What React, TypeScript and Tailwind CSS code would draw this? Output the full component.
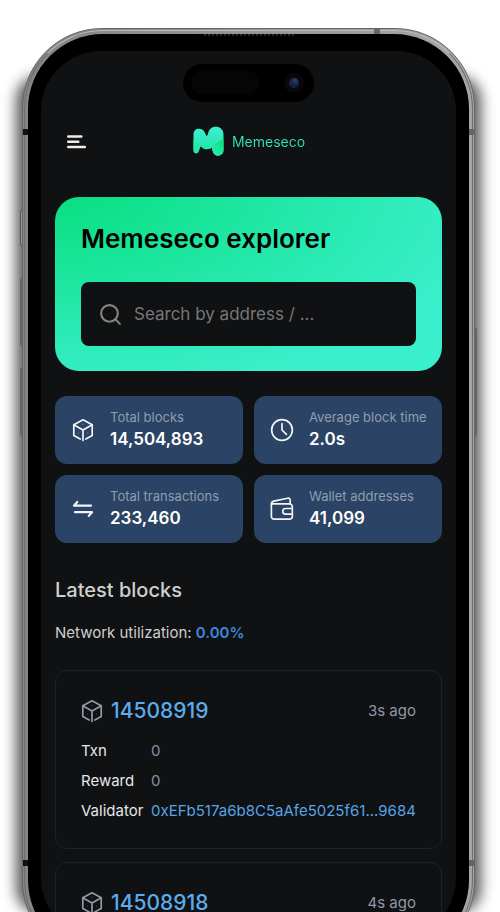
import type { ReactNode } from "react";
import { Search } from "lucide-react";

type Block = {
  height: string;
  age: string;
  details?: { txn: number; reward: number; validator: string };
};

const blocks: Block[] = [
  {
    height: "14508919",
    age: "3s ago",
    details: { txn: 0, reward: 0, validator: "0xEFb517a6b8C5aAfe5025f61...9684" },
  },
  { height: "14508918", age: "4s ago" },
];

function CubeIcon() {
  return (
    <svg viewBox="0 0 22 24" className="h-6 w-[22px] shrink-0" fill="none" stroke="currentColor" strokeWidth="1.7" strokeLinejoin="round" strokeLinecap="round">
      <path d="M8.200 21 1.800 17.500V6.700L11 1.800l9.200 4.900v10.800L13.800 21" />
      <path d="M1.800 6.700l9.200 5.300 9.200-5.300M11 12V22.500" />
      <path d="M11 6v.6M6 15.300l.5-.3M16 15.300l-.5-.3" strokeWidth="1" strokeOpacity="0.4" />
    </svg>
  );
}

function ClockIcon() {
  return (
    <svg viewBox="0 0 26 26" className="size-[26px]" fill="none" stroke="currentColor" strokeWidth="1.8" strokeLinecap="round" strokeLinejoin="round">
      <circle cx="13" cy="13" r="11.2" />
      <path d="M13 6v7l4.800 4.800" />
    </svg>
  );
}

function TransferIcon() {
  return (
    <svg viewBox="0 0 22 18" className="h-[18px] w-[22px]" fill="none" stroke="currentColor" strokeWidth="2.2" strokeLinecap="round" strokeLinejoin="round">
      <path d="M19 5.700H2L5.200 2M3 12.200h17l-3.200 3.700" />
    </svg>
  );
}

function WalletIcon() {
  return (
    <svg viewBox="0 0 26 26" className="size-[26px]" fill="none" stroke="currentColor" strokeWidth="1.8" strokeLinecap="round" strokeLinejoin="round">
      <path d="M1.500 7.500h19.700a3 3 0 0 1 3 3v10.500a3 3 0 0 1-3 3H4.500a3 3 0 0 1-3-3z" />
      <path d="M1.500 7.800C1.500 6 2.300 5 4.200 4.500L19 1.300c1.700-.4 2.800.4 2.800 2v4.200" />
      <path d="M24 12.500h-7.200a3 3 0 0 0 0 6H24" />
    </svg>
  );
}

function Logo() {
  return (
    <svg viewBox="0 0 32 32" className="size-8">
      <defs>
        <linearGradient id="logo-light" x1="0" y1="0" x2="0" y2="1">
          <stop offset="0" stopColor="#41efd5" />
          <stop offset="1" stopColor="#16e59c" />
        </linearGradient>
        <linearGradient id="logo-dark" x1="0" y1="1" x2="1" y2="0">
          <stop offset="0" stopColor="#3cf0c6" />
          <stop offset="1" stopColor="#07df7f" />
        </linearGradient>
        <clipPath id="logo-shape">
          <path d="M1.500 9C1.500 3 10 2 12.500 7l2 4c.8 0 1.300-1.500 1.800-3.500C18-.5 31.500-.5 31.500 9.500V25c0 7-9.500 7.500-10.700 1.500l-1-4c-1.300 1.500-6.300 2.500-8.300 1-1.500-1-2-2-3-2.500L7.200 25.500C6 30 1.500 29 1.500 25z" />
        </clipPath>
      </defs>
      <g clipPath="url(#logo-shape)">
        <path d="M0 0h32v32H0z" fill="url(#logo-light)" />
        <path d="M0 14l9.500 7L0 32z" fill="#24eaa5" />
        <path d="M32 14c-5 2-8 4.500-12 8-4 3-8 2-12-2v12h24z" fill="url(#logo-dark)" />
      </g>
    </svg>
  );
}

function Stat({ icon, label, value }: { icon: ReactNode; label: string; value: string }) {
  return (
    <div className="flex h-[68px] items-center rounded-xl bg-[#2b4364] pl-4 text-white">
      <div className="flex w-6 shrink-0 items-center justify-center text-gray-100">{icon}</div>
      <div className="ml-[15px] pb-0.5 whitespace-nowrap">
        <p className="text-[13px] leading-5 text-[#909db0]">{label}</p>
        <p className="text-[17px] leading-6 font-semibold">{value}</p>
      </div>
    </div>
  );
}

function BlockCard({ block }: { block: Block }) {
  return (
    <article className="rounded-xl border border-[#1f2123] px-[25px] pt-6 pb-[22px]">
      <div className="flex h-8 items-center justify-between">
        <div className="flex items-center gap-2 text-[#9299a8]">
          <CubeIcon />
          <a href="#" className="text-[21px] leading-8 font-medium text-[#5babed]">
            {block.height}
          </a>
        </div>
        <span className="text-[15px] text-[#8f98aa]">{block.age}</span>
      </div>
      {block.details && (
        <dl className="mt-[9px] grid grid-cols-[62px_1fr] gap-x-2 text-[15px] leading-[30px] whitespace-nowrap">
          <dt className="text-gray-200">Txn</dt>
          <dd className="text-[#8190aa]">{block.details.txn}</dd>
          <dt className="text-gray-200">Reward</dt>
          <dd className="text-[#8190aa]">{block.details.reward}</dd>
          <dt className="text-gray-200">Validator</dt>
          <dd>
            <a href="#" className="text-[#55a5e8]">
              {block.details.validator}
            </a>
          </dd>
        </dl>
      )}
    </article>
  );
}

function Explorer() {
  return (
    <div className="px-[14px] pt-[70px]">
      <header className="grid grid-cols-[1fr_auto_1fr] items-center pt-1">
        <button type="button" aria-label="Menu" className="ml-3 w-5 pt-0.5 text-[#ececec]">
          <svg viewBox="0 0 20 14" className="h-3.5 w-5" stroke="currentColor" strokeWidth="2.600" strokeLinecap="round">
            <path d="M1.300 1.500h13M1.300 6.700h10M1.300 12h16.500" />
          </svg>
        </button>
        <a href="#" className="flex items-center gap-2">
          <Logo />
          <span className="bg-linear-to-b from-[#40ead2] to-[#20dca0] bg-clip-text text-[14px] text-transparent">
            Memeseco
          </span>
        </a>
      </header>

      <section className="mt-10 rounded-3xl bg-[radial-gradient(ellipse_at_top_left,#08df80,#3aefcb_80%)] px-[26px] pt-6 pb-[25px]">
        <h1 className="text-[26px] leading-9 font-semibold text-black">Memeseco explorer</h1>
        <label className="mt-[25px] flex h-16 items-center gap-[11px] rounded-lg bg-[#101112] px-[17px]">
          <Search className="size-[25px] shrink-0 text-[#858585]" strokeWidth={2} />
          <input
            type="text"
            aria-label="Search"
            placeholder="Search by address / ..."
            className="w-full min-w-0 bg-transparent pt-0.5 text-[17px] text-white outline-none placeholder:text-[#777]"
          />
        </label>
      </section>

      <section className="mt-[25px] grid grid-cols-2 gap-[11px]">
        <Stat icon={<CubeIcon />} label="Total blocks" value="14,504,893" />
        <Stat icon={<ClockIcon />} label="Average block time" value="2.0s" />
        <Stat icon={<TransferIcon />} label="Total transactions" value="233,460" />
        <Stat icon={<WalletIcon />} label="Wallet addresses" value="41,099" />
      </section>

      <section className="mt-[33px]">
        <h2 className="text-[20px] leading-7 font-medium text-[#cfcfcf]">Latest blocks</h2>
        <p className="mt-[17px] text-[15px] leading-6 text-[#cfcfcf]">
          Network utilization: <span className="font-semibold text-[#3c87df]">0.00%</span>
        </p>
        <div className="mt-[25px] grid gap-[13px]">
          {blocks.map((block) => (
            <BlockCard key={block.height} block={block} />
          ))}
        </div>
      </section>
    </div>
  );
}

export default function App() {
  return (
    <main className="h-screen overflow-hidden bg-white pt-7 pr-[25px] pl-[22px] font-['Inter',sans-serif]">
      <div className="relative h-[933px]">
        {/* drop shadow starts below the rounded corner */}
        <div className="absolute -inset-x-1.5 top-12 bottom-12 rounded-3xl bg-black/65 blur-[7px]" />
        {/* side buttons */}
        <div className="absolute top-[182px] -left-0.5 h-9 w-1 rounded-xs border border-[#555] bg-[#999]" />
        <div className="absolute top-[250px] -left-0.5 h-[68px] w-1 rounded-xs bg-[#666]" />
        <div className="absolute top-[340px] -left-0.5 h-[68px] w-1 rounded-xs bg-[#666]" />
        <div className="absolute top-[300px] -right-0.5 h-[108px] w-1 rounded-xs bg-[#666]" />
        <div className="absolute inset-0 overflow-hidden rounded-[80px] border border-[#666] bg-linear-to-r from-[#858585] to-[#a6a6a6] p-[5px]">
          <div className="absolute inset-px rounded-[79px] border border-[#6e6e6e] border-t-[#bbb]" />
          <div className="absolute top-[100px] left-0 h-1.5 w-full bg-linear-to-r from-[#111] to-[#666]" />
          <div className="absolute bottom-[94px] left-0 h-1.5 w-full bg-linear-to-r from-[#111] to-[#666]" />
          <div className="absolute top-0 right-[94px] h-1.5 w-[6px] bg-[#666]" />
          <div className="relative h-full rounded-[75px] bg-black px-[13px] py-[17px]">
            <div className="h-full overflow-hidden rounded-[60px] bg-[#101112]">
              <Explorer />
            </div>
            {/* speaker grille and camera island */}
            <div className="absolute inset-x-0 top-0 mx-auto h-0.5 w-[90px] border-t-2 border-dotted border-[#2a2a2a]" />
            <div className="absolute inset-x-0 top-[30px] mx-auto flex h-[38px] w-[131px] items-center justify-between rounded-full bg-black px-2">
              <div className="h-6 w-[68px] rounded-full bg-[#050505]" />
              <div className="mr-0.5 flex size-5 items-center justify-center rounded-full bg-[#080809]">
                <div className="size-2.5 rounded-full bg-[radial-gradient(circle_at_60%_25%,#204560,#161a4a_55%,#283044)]" />
              </div>
            </div>
          </div>
        </div>
      </div>
    </main>
  );
}
